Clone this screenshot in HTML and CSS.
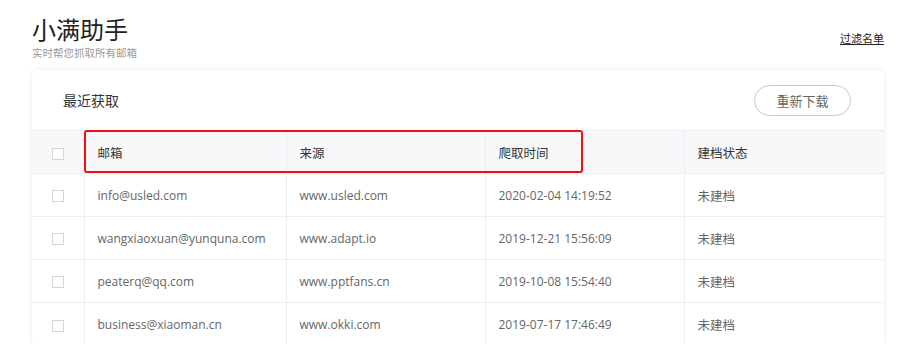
FILE: index.html
```html
<!DOCTYPE html>
<html lang="zh-CN">
<head>
  <meta charset="UTF-8" />
  <meta name="viewport" content="width=device-width, initial-scale=1.0" />
  <title>小满助手</title>
  <link rel="stylesheet" href="styles.css">
</head>
<body>
  <header class="top">
    <div class="brand">
      <h1>小满助手</h1>
      <p>实时帮您抓取所有邮箱</p>
    </div>
    <a class="filter-link" href="#">过滤名单</a>
  </header>

  <div class="card">
    <div class="card-head">
      <h2>最近获取</h2>
      <button class="btn">重新下载</button>
    </div>

    <div class="table-wrap">
      <table class="list">
        <colgroup>
          <col class="c-check" />
          <col class="c-mail" />
          <col class="c-src" />
          <col class="c-time" />
          <col class="c-state" />
        </colgroup>
        <thead>
          <tr>
            <th><span class="check"></span></th>
            <th>邮箱</th>
            <th>来源</th>
            <th>爬取时间</th>
            <th>建档状态</th>
          </tr>
        </thead>
        <tbody>
          <tr>
            <td><span class="check"></span></td>
            <td>info@usled.com</td>
            <td>www.usled.com</td>
            <td>2020-02-04 14:19:52</td>
            <td>未建档</td>
          </tr>
          <tr>
            <td><span class="check"></span></td>
            <td>wangxiaoxuan@yunquna.com</td>
            <td>www.adapt.io</td>
            <td>2019-12-21 15:56:09</td>
            <td>未建档</td>
          </tr>
          <tr>
            <td><span class="check"></span></td>
            <td>peaterq@qq.com</td>
            <td>www.pptfans.cn</td>
            <td>2019-10-08 15:54:40</td>
            <td>未建档</td>
          </tr>
          <tr>
            <td><span class="check"></span></td>
            <td>business@xiaoman.cn</td>
            <td>www.okki.com</td>
            <td>2019-07-17 17:46:49</td>
            <td>未建档</td>
          </tr>
        </tbody>
      </table>
      <div class="highlight"></div>
    </div>
  </div>
</body>
</html>
```

FILE: styles.css
```css
* {
  margin: 0;
  padding: 0;
  box-sizing: border-box;
}

body {
  font-family: 'Open Sans', 'Noto Sans CJK SC', sans-serif;
  background: #fff;
  color: #333;
  padding: 0 16px 0 32px;
  overflow: hidden;
}

.top {
  display: flex;
  justify-content: space-between;
  align-items: flex-start;
  padding-top: 15px;
}

.brand h1 {
  font-family: 'Noto Sans CJK SC', sans-serif;
  font-size: 24px;
  line-height: 28px;
  font-weight: 400;
  color: #222;
}

.brand p {
  font-family: 'Noto Sans CJK SC', sans-serif;
  margin-top: 3px;
  font-size: 10.5px;
  line-height: 13px;
  color: #999;
}

.filter-link {
  font-family: 'Noto Sans CJK SC', sans-serif;
  margin-top: 15px;
  font-size: 11px;
  line-height: 16px;
  color: #222;
  text-decoration: underline;
}

.card {
  margin-top: 11px;
  background: #fff;
  border-radius: 6px;
  box-shadow: 0 0 6px rgba(0, 0, 0, 0.08);
}

.card-head {
  height: 60px;
  display: flex;
  align-items: center;
  justify-content: space-between;
  padding: 0 33px 0 31px;
}

.card-head h2 {
  font-family: 'Noto Sans CJK SC', sans-serif;
  font-size: 14px;
  font-weight: 400;
  color: #333;
}

.btn {
  font-family: 'Noto Sans CJK SC', sans-serif;
  width: 97px;
  height: 31px;
  border: 1px solid #c8c8c8;
  border-radius: 16px;
  background: #fff;
  color: #666;
  font-size: 13px;
  cursor: pointer;
}

.table-wrap {
  position: relative;
}

.list {
  width: 100%;
  border-collapse: collapse;
  table-layout: fixed;
  font-size: 12px;
}

.c-check { width: 52px; }
.c-mail { width: 202px; }
.c-src { width: 199px; }
.c-time { width: 199px; }
.c-state { width: 200px; }

.list th,
.list td {
  height: 43px;
  text-align: left;
  padding: 0 13px;
  border-top: 1px solid #ebedf3;
  border-left: 1px solid #ebedf3;
  white-space: nowrap;
}

.list th:first-child,
.list td:first-child {
  border-left: none;
  padding: 0;
  text-align: center;
}

.list th {
  font-family: 'Noto Sans CJK SC', sans-serif;
  font-size: 12.5px;
  background: #f8f8fa;
  font-weight: 400;
  color: #333;
}

.list td {
  color: #666;
}

.list td:last-child {
  font-family: 'Noto Sans CJK SC', sans-serif;
  font-size: 12.5px;
}

.check {
  display: inline-block;
  width: 12px;
  height: 12px;
  border: 1px solid #d6d6d6;
  background: #fff;
  vertical-align: middle;
}

.highlight {
  position: absolute;
  top: 0;
  left: 52px;
  width: 499px;
  height: 43px;
  border: 2px solid #f01010;
  border-radius: 3px;
}
```
